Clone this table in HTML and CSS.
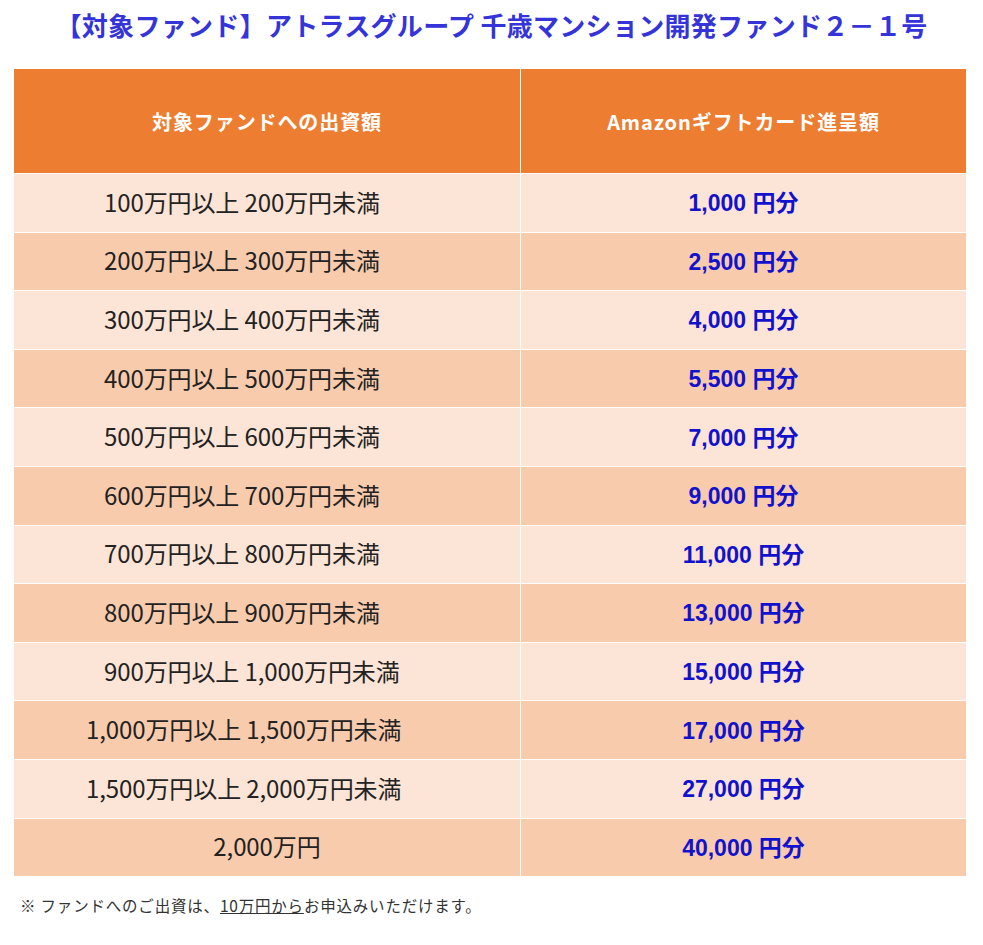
FILE: index.html
```html
<!DOCTYPE html>
<html lang="ja">
<head>
<meta charset="utf-8">
<title>対象ファンド</title>
<link rel="stylesheet" href="styles.css">
</head>
<body>
<div class="page">
  <h1 class="title">【対象ファンド】アトラスグループ 千歳マンション開発ファンド２－１号</h1>
  <table class="gift-table">
    <thead>
      <tr>
        <th class="col-amount">対象ファンドへの出資額</th>
        <th class="col-gift">Amazonギフトカード進呈額</th>
      </tr>
    </thead>
    <tbody>
      <tr class="light"><td class="amount">100万円以上 200万円未満</td><td class="gift">1,000 円分</td></tr>
      <tr class="dark"><td class="amount">200万円以上 300万円未満</td><td class="gift">2,500 円分</td></tr>
      <tr class="light"><td class="amount">300万円以上 400万円未満</td><td class="gift">4,000 円分</td></tr>
      <tr class="dark"><td class="amount">400万円以上 500万円未満</td><td class="gift">5,500 円分</td></tr>
      <tr class="light"><td class="amount">500万円以上 600万円未満</td><td class="gift">7,000 円分</td></tr>
      <tr class="dark"><td class="amount">600万円以上 700万円未満</td><td class="gift">9,000 円分</td></tr>
      <tr class="light"><td class="amount">700万円以上 800万円未満</td><td class="gift">11,000 円分</td></tr>
      <tr class="dark"><td class="amount">800万円以上 900万円未満</td><td class="gift">13,000 円分</td></tr>
      <tr class="light"><td class="amount">900万円以上 1,000万円未満</td><td class="gift">15,000 円分</td></tr>
      <tr class="dark"><td class="amount wide">1,000万円以上 1,500万円未満</td><td class="gift">17,000 円分</td></tr>
      <tr class="light"><td class="amount wide">1,500万円以上 2,000万円未満</td><td class="gift">27,000 円分</td></tr>
      <tr class="dark"><td class="amount centered">2,000万円</td><td class="gift">40,000 円分</td></tr>
    </tbody>
  </table>
  <p class="note">※ ファンドへのご出資は、<span class="underline">10万円から</span>お申込みいただけます。</p>
</div>
</body>
</html>
```

FILE: styles.css
```css
html, body {
  margin: 0;
  padding: 0;
  background: #ffffff;
}

.page {
  width: 983px;
  font-family: "Noto Sans CJK JP", "Noto Sans", sans-serif;
}

.title {
  margin: 0;
  padding-top: 7px;
  height: 37px;
  line-height: 36px;
  font-size: 26px;
  font-weight: 700;
  letter-spacing: 0.3px;
  color: #3434d8;
  text-align: center;
  white-space: nowrap;
}

.gift-table {
  margin: 24px 0 0 13px;
  width: 953px;
  border-collapse: collapse;
  table-layout: fixed;
}

.gift-table th,
.gift-table td {
  border: 1px solid #ffffff;
  padding: 0;
  vertical-align: middle;
  box-sizing: border-box;
}

.gift-table th {
  background: #ed7d31;
  color: #ffffff;
  font-size: 20px;
  font-weight: 700;
  letter-spacing: 0.9px;
  height: 105px;
  text-align: center;
}

.col-amount { width: 507px; }
.col-gift { width: 446px; }

.gift-table td {
  height: 58.6px;
  padding-bottom: 3px;
}

.light td { background: #fce4d6; }
.dark td { background: #f8cbad; }

.amount {
  font-size: 24px;
  font-weight: 400;
  letter-spacing: -0.1px;
  color: #222222;
  text-align: left;
  padding-left: 90px !important;
  white-space: nowrap;
}

.amount.wide {
  padding-left: 72px !important;
}

.amount.centered {
  padding-left: 0 !important;
  text-align: center;
}

.gift {
  font-family: "Liberation Sans", "Noto Sans CJK JP", sans-serif;
  font-size: 23px;
  font-weight: 700;
  color: #1212cc;
  text-align: center;
}

.note {
  margin: 16px 0 0 20px;
  font-size: 15.5px;
  letter-spacing: 0.8px;
  color: #333333;
  line-height: 24px;
}

.underline {
  text-decoration: underline;
}
```
